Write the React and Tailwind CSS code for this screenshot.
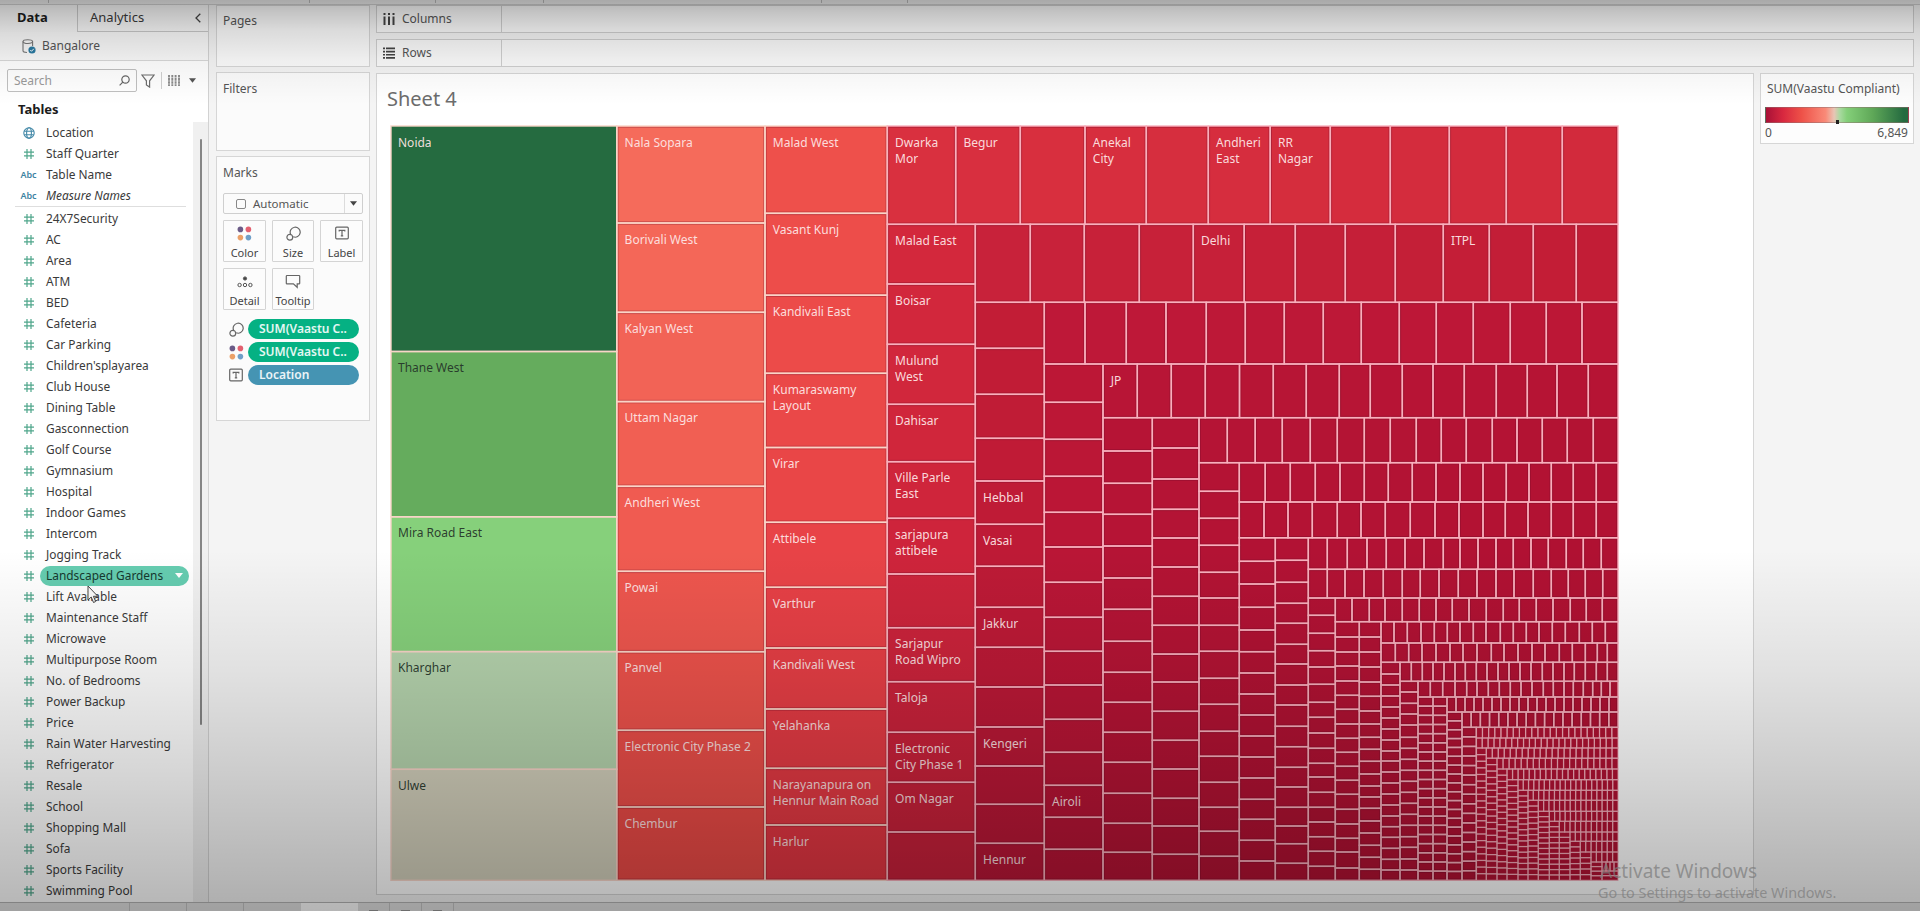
import React from 'react';

const FIELDS = [
  '24X7Security', 'AC', 'Area', 'ATM', 'BED', 'Cafeteria', 'Car Parking', "Children'splayarea",
  'Club House', 'Dining Table', 'Gasconnection', 'Golf Course', 'Gymnasium', 'Hospital',
  'Indoor Games', 'Intercom', 'Jogging Track', 'Landscaped Gardens', 'Lift Available',
  'Maintenance Staff', 'Microwave', 'Multipurpose Room', 'No. of Bedrooms', 'Power Backup',
  'Price', 'Rain Water Harvesting', 'Refrigerator', 'Resale', 'School', 'Shopping Mall', 'Sofa',
  'Sports Facility', 'Swimming Pool',
];

const LEFT = 391;
const TOP = 126;
const RIGHT = 1618;
const BOTTOM = 880.3;

// Builds evenly stepped cuts between two bounds.
const step = (from, to, size) => {
  const n = Math.max(1, Math.round((to - from) / size));
  return Array.from({ length: n - 1 }, (_, i) => from + ((i + 1) * (to - from)) / n);
};
const thirds = (base, list) => list.map((v) => base + v / 3);

// Each strip takes a slice off the left ("c") or the top ("r") of the free area:
// [kind, far edge, inner cuts, first colour, last colour, labels]
const STRIPS = [
  ['c', 616.8, [351.5, 516.8, 651.6, 769.3], null, null,
    { 0: 'Noida', 1: 'Thane West', 2: 'Mira Road East', 3: 'Kharghar', 4: 'Ulwe' }],
  ['c', 765, [223, 312.3, 401.6, 486.3, 571.3, 651.7, 730.3, 807], [245, 107, 91], [234, 74, 70],
    { 0: 'Nala Sopara', 1: 'Borivali West', 2: 'Kalyan West', 3: 'Uttam Nagar', 4: 'Andheri West', 5: 'Powai', 6: 'Panvel', 7: 'Electronic City Phase 2', 8: 'Chembur' }],
  ['c', 887.3, [213.3, 295.2, 373.3, 447.5, 522.3, 587.3, 648, 709, 768.3, 825], [238, 80, 75], [226, 54, 66],
    { 0: 'Malad West', 1: 'Vasant Kunj', 2: 'Kandivali East', 3: 'Kumaraswamy|Layout', 4: 'Virar', 5: 'Attibele', 6: 'Varthur', 7: 'Kandivali West', 8: 'Yelahanka', 9: 'Narayanapura on|Hennur Main Road', 10: 'Harlur' }],
  ['r', 224.3, [955.7, 1020.3, 1085, 1146.3, 1208.3, 1270.2, 1330.3, 1390.3, 1449.3, 1506.3, 1562.3], [217, 48, 63], [210, 42, 60],
    { 0: 'Dwarka|Mor', 1: 'Begur', 3: 'Anekal|City', 5: 'Andheri|East', 6: 'RR|Nagar' }],
  ['c', 975.3, [284, 344.3, 404.3, 461.7, 518.3, 574, 627.7, 681.7, 732.3, 782.3, 832], [211, 40, 60], [199, 32, 58],
    { 0: 'Malad East', 1: 'Boisar', 2: 'Mulund|West', 3: 'Dahisar', 4: 'Ville Parle|East', 5: 'sarjapura|attibele', 7: 'Sarjapur|Road Wipro', 8: 'Taloja', 9: 'Electronic|City Phase 1', 10: 'Om Nagar' }],
  ['r', 302.3, [1030.3, 1084.3, 1139.3, 1193.3, 1244.2, 1295.3, 1345.3, 1395.3, 1443.3, 1489.3, 1533.3, 1576.3], [200, 34, 58], [194, 29, 54],
    { 4: 'Delhi', 9: 'ITPL' }],
  ['c', 1044.3, [348.3, 394.3, 438.3, 481, 524.3, 566.3, 607.3, 647.3, 687, 727, 766, 804.3, 843.3], [194, 29, 54], [184, 22, 54],
    { 4: 'Hebbal', 5: 'Vasai', 7: 'Jakkur', 10: 'Kengeri', 13: 'Hennur' }],
  ['r', 364, [1085, 1126.3, 1166, 1206.3, 1245.3, 1284.3, 1323.3, 1361.3, 1399.3, 1436.3, 1473.3, 1510.3, 1546.3, 1582], [190, 24, 56], [188, 23, 54], {}],
  ['c', 1103, [402.3, 439.3, 476.3, 512.3, 547, 582.3, 617.3, 651.3, 685, 719.3, 752.3, 785.3, 817.3, 849.3], [188, 23, 54], [182, 20, 53], { 12: 'Airoli' }],
  ['r', 417.7, [1137.3, 1171.3, 1205.3, 1239.5, 1273.3, 1306.3, 1339.3, 1370.3, 1402.3, 1433, 1464.3, 1496.3, 1527.3, 1557, 1588.3], [184, 21, 54], [182, 20, 52], { 0: 'JP' }],
  ['c', 1152.3, [451, 483.3, 514.3, 546, 578, 609.3, 641.3, 672.3, 702.3, 732.3, 762.3, 793.3, 823.3, 852.3], [182, 20, 53], [180, 19, 52], {}],
  ['c', 1199, [448, 479, 509.3, 538, 567, 596.3, 625.3, 654.1, 682, 711.3, 740.3, 769, 798.3, 826, 854.3], [181, 20, 53], [178, 18, 51], {}],
  ['r', 462.7, [1227.3, 1255.2, 1282.3, 1310.3, 1337.3, 1364.3, 1390.3, 1416.3, 1441.3, 1466.3, 1492.3, 1517, 1542.3, 1567.3, 1593.3], [181, 20, 53], [179, 19, 51], {}],
  ['c', 1239.3, [491.3, 518.3, 545.3, 572.3, 598, 625.3, 651.3, 678.3, 704.3, 731.3, 756.3, 782.3, 807.3, 831.3, 856.3], [180, 19, 52], [177, 18, 51], {}],
  ['r', 502, [1265.2, 1290.3, 1315.3, 1340, 1364.3, 1388.3, 1412.3, 1436, 1460, 1483, 1506.3, 1529, 1551.3, 1573.3, 1596.3], [180, 19, 52], [178, 18, 51], {}],
  ['r', 537.8, [1264, 1288, 1312.3, 1337.3, 1361, 1385.3, 1410.3, 1435, 1459, 1483, 1505.3, 1528, 1551.3, 1573.3, 1596.3], [180, 19, 52], [178, 18, 51], {}],
  ['c', 1275.3, [561.3, 584, 607.3, 630, 651.7, 673, 694, 715, 736, 757, 778, 799.3, 819.3, 840.3, 861]],
  ['c', 1308.3, [560.3, 582.3, 603.3, 623.3, 644.3, 664, 685, 705, 726.3, 746.7, 767.3, 787, 807.3, 826, 843.7, 863.3]],
  ['r', 569.3, [1327.3, 1347.3, 1367, 1386.3, 1405, 1424, 1443.3, 1460, 1478, 1496, 1513.3, 1531, 1548.3, 1566.3, 1583.3, 1601.3]],
  ['r', 598, [1327.3, 1345, 1364, 1383.3, 1402.3, 1420.3, 1439, 1458.3, 1477, 1496, 1514, 1533.3, 1551.3, 1568.3, 1585.3, 1602.7]],
  ['c', 1335.3, [615.3, 633.3, 650.7, 667, 684.3, 702.3, 717.3, 733, 748.3, 763.3, 777, 792.3, 807.3, 822, 836.7, 851.3, 866.3]],
  ['r', 621.7, [1352, 1369.3, 1385, 1402.3, 1419.3, 1436, 1452.3, 1469, 1486.3, 1503.3, 1519.3, 1536.3, 1553, 1570.3, 1586.3, 1602.3]],
  ['c', 1359.3, [637, 652, 666, 681, 695.3, 709.3, 724, 738.3, 752.3, 766.3, 780.3, 794.3, 809.3, 824, 838.3, 852, 868]],
  ['c', 1381, [637, 652, 667, 682, 696.3, 711, 724, 737.3, 749.3, 761.3, 774, 786, 797, 808.3, 821, 833, 845.3, 857.3, 869.3]],
  ['r', 643, thirds(1240, [462, 502, 543, 583, 622, 660, 700, 738, 781, 820, 859, 897, 937, 976, 1018, 1057, 1096])],
  ['r', 662.3, thirds(1240, [466, 506, 546, 588, 630, 669, 711, 754, 792, 834, 876, 915, 958, 997, 1036, 1072, 1102])],
  ['c', 1400, thirds(650, [72, 105, 138, 171, 204, 237, 270, 303, 333, 366, 399, 432, 465, 498, 530, 562, 595, 628, 660])],
  ['r', 681.3, thirds(1240, [514, 547, 579, 612, 645, 676, 709, 741, 774, 807, 840, 873, 907, 939, 972, 1003, 1036, 1069, 1102])],
  ['c', 1418, thirds(650, [126, 160, 192, 225, 262, 295, 328, 361, 394, 427, 460, 493, 526, 560, 592, 627, 660])],
  ['r', 697, thirds(1240, [571, 608, 645, 680, 711, 745, 778, 811, 843, 876, 910, 940, 972, 1000, 1030, 1058, 1084, 1110])],
  ['c', 1433, step(697, 880.3, 9.2)],
  ['c', 1447, step(697, 880.3, 9.2)],
  ['r', 712, step(1447, 1618, 9)],
  ['c', 1462, step(712, 880.3, 9)],
  ['r', 727.3, step(1462, 1618, 9)],
  ['c', 1476.3, step(727.3, 880.3, 9.3)],
  ['r', 738, step(1476.3, 1618, 6.2)],
  ['r', 748, step(1476.3, 1618, 5.9)],
  ['c', 1486.3, step(748, 880.3, 6.5)],
  ['r', 758.2, step(1486.3, 1618, 6.1)],
  ['c', 1497, step(758.2, 880.3, 6.3)],
  ['r', 769, step(1497, 1618, 6)],
  ['c', 1507, step(769, 880.3, 6.3)],
  ['r', 779.7, step(1507, 1618, 5.6)],
  ['c', 1518, step(779.7, 880.3, 5.8)],
  ['r', 790.3, step(1518, 1618, 5.4)],
  ['c', 1528, step(790.3, 880.3, 5.8)],
  ['r', 800.3, step(1528, 1618, 5.3)],
  ['c', 1538.3, step(800.3, 880.3, 5.6)],
  ['r', 811.3, step(1538.3, 1618, 5.3)],
  ['c', 1549.3, step(811.3, 880.3, 5.5)],
  ['r', 821.3, step(1549.3, 1618, 5.3)],
  ['c', 1559.3, step(821.3, 880.3, 5.4)],
  ['r', 832, step(1559.3, 1618, 5.2)],
  ['c', 1570, step(832, 880.3, 5.4)],
  ['r', 841.3, step(1570, 1618, 5.2)],
  ['c', 1580.3, step(841.3, 880.3, 5.3)],
  ['r', 852, step(1580.3, 1618, 5.2)],
  ['c', 1591, step(852, 880.3, 5.5)],
  ['r', 862, step(1591, 1618, 5)],
  ['c', 1602, step(862, 880.3, 5)],
  ['r', 871, step(1602, 1618, 4.5)],
  ['c', 1618, step(871, 880.3, 4.5)],
];

const FIRST = ['#256b40', '#65ac5d', '#86d07b', '#b5d3ad', '#d2cfbb'];
const mix = (a, b, t) => `rgb(${a.map((v, i) => Math.round(v + (b[i] - v) * t)).join(',')})`;

function buildCells() {
  const cells = [];
  let x = LEFT;
  let y = TOP;
  STRIPS.forEach(([kind, edge, cuts, from = [178, 18, 52], to = [176, 17, 50], labels = {}], s) => {
    const isCol = kind === 'c';
    const marks = [isCol ? y : x, ...cuts, isCol ? BOTTOM : RIGHT];
    for (let i = 0; i < marks.length - 1; i++) {
      const fill = s === 0 ? FIRST[i] : mix(from, to, i / Math.max(1, marks.length - 2));
      const size = marks[i + 1] - marks[i];
      cells.push({
        x: isCol ? x : marks[i],
        y: isCol ? marks[i] : y,
        w: isCol ? edge - x : size,
        h: isCol ? size : edge - y,
        fill,
        strip: s,
        dark: s === 0 && i > 0,
        label: labels[i],
      });
    }
    if (isCol) x = edge;
    else y = edge;
  });
  return cells;
}
const CELLS = buildCells();

function Treemap() {
  return (
    <svg className="block h-[756px] w-[1230px] shrink-0" viewBox="390 125 1230 756" fontFamily="'Noto Sans', sans-serif">
      {CELLS.map((c, i) => (
        <g key={i}>
          <rect x={c.x} y={c.y} width={c.w} height={c.h} fill={c.fill} />
          {c.strip > 0 && c.w > 8 && c.h > 8 && (
            <rect x={c.x + 1.3} y={c.y + 1.3} width={c.w - 2.6} height={c.h - 2.6} fill="none" stroke="#5a0828" strokeOpacity="0.28" strokeWidth="1" />
          )}
        </g>
      ))}
      {CELLS.map((c, i) => (
        <rect key={i} x={c.x} y={c.y} width={c.w} height={c.h} fill="none" stroke={c.strip < 3 ? '#f9d5c8' : '#f7b0bd'} strokeOpacity={c.strip < 36 ? 0.92 : 0.75} strokeWidth={c.strip < 36 ? 1.5 : 1.2} />
      ))}
      {CELLS.filter((c) => c.label).map((c) => (
        <text key={c.label} fontSize="12" fill={c.dark ? '#26352a' : '#fde6e6'} fillOpacity="0.95">
          {c.label.split('|').map((line, j) => (
            <tspan key={j} x={c.x + (c.strip > 0 ? 7.8 : 7)} y={c.y + 20.6 + j * 16}>{line}</tspan>
          ))}
        </text>
      ))}
    </svg>
  );
}

const Hash = () => (
  <svg className="h-3 w-3" viewBox="0 0 12 12" fill="none" stroke="#4fa68b" strokeWidth="1.2">
    <path d="M4 1v10M8 1v10M1 4.2h10M1 7.8h10" />
  </svg>
);
const Globe = () => (
  <svg className="h-3 w-3" viewBox="0 0 12 12" fill="none" stroke="#4489a8" strokeWidth="1.1">
    <circle cx="6" cy="6" r="5.2" />
    <ellipse cx="6" cy="6" rx="2.4" ry="5.2" />
    <path d="M1.2 4.3h9.6M1.2 7.7h9.6" />
  </svg>
);
const Abc = () => <span className="text-[9px] font-semibold text-[#3e84a3]">Abc</span>;
const Dots = () => (
  <svg className="h-[15px] w-[15px]" viewBox="0 0 15 15">
    <circle cx="3.4" cy="3.4" r="2.8" fill="#6b5b87" />
    <circle cx="11.4" cy="3.4" r="2.8" fill="#e3606f" />
    <circle cx="3.4" cy="11.6" r="2.8" fill="#eba068" />
    <circle cx="11.4" cy="11.6" r="2.8" fill="#6f9fc8" />
  </svg>
);
const SizeIcon = () => (
  <svg className="h-[15px] w-[15px]" viewBox="0 0 15 15" fill="none" stroke="#666" strokeWidth="1.2">
    <path d="M4.6 8.2A5 5 0 1 1 7.2 10.8" />
    <circle cx="3.8" cy="11.2" r="2.9" />
  </svg>
);
const LabelIcon = () => (
  <svg className="h-[14px] w-[14px]" viewBox="0 0 14 14" fill="none" stroke="#666" strokeWidth="1.2">
    <rect x="0.7" y="1.2" width="12.6" height="11.6" rx="1" />
    <path d="M4.2 5.4V4.3h5.6v1.1M7 4.3v5.6M5.8 9.9h2.4" />
  </svg>
);
const DetailIcon = () => (
  <svg className="h-[14px] w-[16px]" viewBox="0 0 16 14" fill="none" stroke="#555" strokeWidth="1">
    <circle cx="8" cy="4.5" r="1.6" fill="#444" />
    <circle cx="2.6" cy="11" r="1.7" />
    <circle cx="8" cy="11" r="1.7" />
    <circle cx="13.4" cy="11" r="1.7" />
  </svg>
);
const TooltipIcon = () => (
  <svg className="h-[15px] w-[16px]" viewBox="0 0 16 15" fill="none" stroke="#666" strokeWidth="1.2">
    <path d="M2 1.5h12a.7.7 0 0 1 .7.7v7a.7.7 0 0 1-.7.7h-1.8v3.4L8.4 9.9H2a.7.7 0 0 1-.7-.7v-7a.7.7 0 0 1 .7-.7z" />
  </svg>
);
const Caret = ({ className }) => (
  <svg className={className} viewBox="0 0 8 5" fill="currentColor"><path d="M0 0h8L4 5z" /></svg>
);

function Field({ icon, name, italic, active }) {
  return (
    <div className="flex h-[21px] shrink-0 items-center">
      <span className="ml-[18px] flex w-[21px] justify-center">{icon}</span>
      <span
        className={
          active
            ? 'ml-px flex h-5 w-[149px] items-center justify-between rounded-full bg-[#65ccb0] pr-[6px] pl-[6px] text-[#16392f]'
            : italic
              ? 'ml-[7px] italic'
              : 'ml-[7px]'
        }
      >
        <span className="whitespace-nowrap">{name}</span>
        {active && <Caret className="h-[5px] w-2 text-white" />}
      </span>
    </div>
  );
}

function Sidebar() {
  return (
    <aside className="flex w-[209px] shrink-0 flex-col border-r border-[#d2d2d2] bg-white text-[#3a3a3a]">
      <div className="flex h-[27px] shrink-0 bg-[#f7f7f7] text-[13px]">
        <div className="w-[77px] pt-[3px] pl-[17px] text-[13px] font-bold text-[#1c1c1c]">Data</div>
        <div className="flex flex-1 justify-between border-b border-l border-[#c8c8c8] pt-[3px] pr-[7px] pl-3">
          Analytics
          <svg className="mt-[5px] h-2.5 w-1.5" viewBox="0 0 6 10" fill="none" stroke="#444" strokeWidth="1.3"><path d="M5.3.7 1 5l4.3 4.3" /></svg>
        </div>
      </div>
      <div className="flex h-[29px] shrink-0 items-center border-b border-[#d8d8d8] bg-[#f9f9f9] pl-[22px] text-[12px] text-[#555]">
        <svg className="mr-1.5 h-[15px] w-[14px]" viewBox="0 0 14 15" fill="none">
          <path d="M1 2.6v9.2c0 .9 1.8 1.7 4 1.7M10.6 2.6v4.5" stroke="#777" strokeWidth="1.1" />
          <ellipse cx="5.8" cy="2.6" rx="4.8" ry="1.9" stroke="#777" strokeWidth="1.1" />
          <circle cx="10" cy="11" r="3.6" fill="#2b7ba3" />
          <path d="m8.3 11 1.2 1.3 2.3-2.5" stroke="#fff" />
        </svg>
        Bangalore
      </div>
      <div className="mt-2 flex h-[23px] shrink-0 items-center pl-[7px]">
        <div className="flex h-[23px] w-[130px] items-center justify-between rounded-[2px] border border-[#c0c0c0] px-1.5 text-xs text-[#9a9a9a]">
          Search
          <svg className="h-[11px] w-[11px]" viewBox="0 0 11 11" fill="none" stroke="#666" strokeWidth="1.2"><circle cx="6.5" cy="4.5" r="3.7" /><path d="M3.8 7.2.6 10.4" /></svg>
        </div>
        <svg className="ml-1 h-[14px] w-[14px]" viewBox="0 0 14 14" fill="none" stroke="#6d6d6d" strokeWidth="1.2"><path d="M.9 1h12.2L8.600 6.800v6.300L5.400 11V6.800z" /></svg>
        <div className="ml-[6px] h-[17px] w-px bg-[#d0d0d0]" />
        <svg className="ml-[6px] h-[11px] w-3" viewBox="0 0 12 11" fill="none" stroke="#8b8b8b" strokeWidth="1.9"><path d="M1 0v11M4.3 0v11M7.6 0v11M11 0v11" strokeDasharray="2.6 .5" /></svg>
        <Caret className="ml-[9px] h-[5px] w-[7px] text-[#555]" />
      </div>
      <div className="h-[30px] shrink-0 pt-[7px] pl-[18px] text-[13px] leading-[20px] font-bold text-[#1c1c1c]">Tables</div>
      <div className="flex min-h-0 flex-1 overflow-hidden">
        <div className="flex w-[193px] flex-col text-[11.9px]">
          <Field icon={<Globe />} name="Location" />
          <Field icon={<Hash />} name="Staff Quarter" />
          <Field icon={<Abc />} name="Table Name" />
          <Field icon={<Abc />} name="Measure Names" italic />
          <div className="mr-[7px] mb-px ml-[15px] h-px shrink-0 bg-[#dedede]" />
          {FIELDS.map((f) => (
            <Field key={f} icon={<Hash />} name={f} active={f === 'Landscaped Gardens'} />
          ))}
        </div>
        <div className="flex flex-1 justify-center bg-[#f0f0f0] pt-[17px]">
          <div className="h-[586px] w-[2px] rounded bg-[#858585]" />
        </div>
      </div>
    </aside>
  );
}

const MarkButton = ({ icon, name }) => (
  <div className="flex h-[42px] flex-col items-center justify-between rounded-[1px] border border-[#d4d4d4] bg-[#fcfcfc] pt-[5px] pb-px text-[11px] leading-[15px] text-[#444]">
    {icon}
    {name}
  </div>
);

const Pill = ({ icon, name, blue }) => (
  <div className="flex items-center">
    <span className="flex w-[22px] justify-center pl-1">{icon}</span>
    <span className={(blue ? 'bg-[#4594b3]' : 'bg-[#05b183]') + ' ml-[3px] flex h-5 w-[111px] items-center rounded-full pl-[11px] text-[12px] font-semibold text-white/90'}>{name}</span>
  </div>
);

function Cards() {
  return (
    <div className="flex w-[167px] shrink-0 flex-col gap-[5px] pr-[6px] pl-[7px] text-xs text-[#555]">
      <section className="h-[62px] border border-[#d6d6d6] bg-[#fbfbfb] px-1.5 pt-[7px]">Pages</section>
      <section className="h-[79px] border border-[#d6d6d6] bg-[#fbfbfb] px-1.5 pt-[8px]">Filters</section>
      <section className="flex h-[265px] flex-col border border-[#d6d6d6] bg-[#fbfbfb] px-1.5 pt-[7px]">
        <div className="leading-[18px]">Marks</div>
        <div className="mt-[11px] flex h-[21px] shrink-0 items-center rounded-[2px] border border-[#cfcfcf] text-[11.5px]">
          <span className="ml-[12px] h-[10px] w-[10px] rounded-[2px] border border-[#888]" />
          <span className="ml-[7px] flex-1">Automatic</span>
          <span className="flex h-full w-[18px] items-center justify-center border-l border-[#dcdcdc]"><Caret className="h-[5px] w-[7px] text-[#444]" /></span>
        </div>
        <div className="mt-[6px] grid grid-cols-[43px_42px_43px] gap-x-[6px] gap-y-[6px]">
          <MarkButton icon={<Dots />} name="Color" />
          <MarkButton icon={<SizeIcon />} name="Size" />
          <MarkButton icon={<LabelIcon />} name="Label" />
          <MarkButton icon={<DetailIcon />} name="Detail" />
          <MarkButton icon={<TooltipIcon />} name="Tooltip" />
        </div>
        <div className="mt-[9px] flex flex-col gap-[3px]">
          <Pill icon={<SizeIcon />} name="SUM(Vaastu C.." />
          <Pill icon={<Dots />} name="SUM(Vaastu C.." />
          <Pill icon={<LabelIcon />} name="Location" blue />
        </div>
      </section>
    </div>
  );
}

const Shelf = ({ icon, name }) => (
  <div className="flex h-[28px] shrink-0 border border-[#cfcfcf] bg-[#fafafa] text-xs text-[#555]">
    <div className="flex w-[125px] items-center gap-[7px] border-r border-[#cfcfcf] pl-[6px]">
      {icon}
      {name}
    </div>
  </div>
);

function Legend() {
  return (
    <section className="h-[71px] w-[154px] shrink-0 border border-[#d6d6d6] bg-[#fdfdfd] px-1 text-xs text-[#555]">
      <div className="mt-[6px] ml-[2px] text-[12px] leading-[18px] whitespace-nowrap">SUM(Vaastu Compliant)</div>
      <div className="relative mt-[9px] h-4 w-[144px] border border-[#8f7070]/50 bg-[linear-gradient(90deg,#a81137_0%,#d8283f_12%,#ee5148_25%,#f98a78_42%,#e8c5b5_48%,#a9d9a0_52%,#84cf79_57%,#5fa858_75%,#256b40_97%)]">
        <span className="absolute -bottom-[2px] left-[70px] h-1 w-[3px] bg-[#222]" />
      </div>
      <div className="mt-[1px] flex w-[143px] justify-between leading-[18px]"><span>0</span><span>6,849</span></div>
    </section>
  );
}

export default function App() {
  return (
    <div className="relative flex h-[911px] w-full flex-col overflow-hidden bg-[#f4f4f4] font-['Noto_Sans',sans-serif]">
      <div className="flex h-[5px] shrink-0 border-b border-[#cfcfcf] bg-[#eee]">
        <div className="w-12" />
        <div className="h-[3px] w-[262px] border-x border-[#bbb]" />
        <div className="ml-[125px] h-[3px] w-[109px] border-x border-[#bbb]" />
        <div className="ml-[277px] h-[3px] w-[87px] border-x border-[#bbb]" />
      </div>
      <div className="flex min-h-0 flex-1">
        <Sidebar />
        <Cards />
        <main className="flex flex-1 flex-col gap-[6px] pr-[6px]">
          <Shelf
            name="Columns"
            icon={<svg className="h-3 w-3" viewBox="0 0 12 12" fill="#444"><path d="M.5 3.500h2V12h-2zM5 3.500h2V12H5zM9.500 3.500h2V12h-2zM.5 0h2v2h-2zM5 0h2v2H5zM9.500 0h2v2h-2z" /></svg>}
          />
          <Shelf
            name="Rows"
            icon={<svg className="h-3 w-3" viewBox="0 0 12 12" fill="#444"><path d="M3 .5h9v1.700H3zM3 3.700h9v1.700H3zM3 6.900h9v1.700H3zM3 10.100h9v1.700H3zM0 .5h2v1.700H0zM0 3.700h2v1.700H0zM0 6.900h2v1.700H0zM0 10.100h2v1.700H0z" /></svg>}
          />
          <div className="flex items-start gap-[6px]">
            <section className="flex h-[822px] w-[1378px] shrink-0 flex-col border border-[#d6d6d6] bg-white">
              <h1 className="h-[51px] shrink-0 pt-[12px] pl-[10px] text-[20px] leading-[26px] text-[#6c6c6c]">Sheet 4</h1>
              <div className="pl-[13px]"><Treemap /></div>
            </section>
            <Legend />
          </div>
        </main>
      </div>
      <div className="flex h-[9px] shrink-0 border-t border-[#b5b5b5] bg-[#e2e2e2]">
        <div className="w-[130px] border-r border-[#c4c4c4]" />
        <div className="w-[57px] border-r border-[#c4c4c4]" />
        <div className="w-[57px] border-r border-[#c4c4c4]" />
        <div className="w-[57px]" />
        <div className="w-[57px] bg-white" />
        <div className="flex w-8 items-end justify-center border-r border-[#c4c4c4]"><span className="h-px w-[9px] bg-[#999]" /></div>
        <div className="flex w-8 items-end justify-center border-r border-[#c4c4c4]"><span className="h-px w-[9px] bg-[#999]" /></div>
        <div className="flex w-8 items-end justify-center border-r border-[#c4c4c4]"><span className="h-px w-[9px] bg-[#999]" /></div>
      </div>
      <div className="pointer-events-none absolute inset-0 bg-[linear-gradient(180deg,rgba(0,0,0,.29)_0px,rgba(0,0,0,.22)_12px,rgba(0,0,0,.13)_30px,rgba(0,0,0,.05)_60px,rgba(0,0,0,0)_105px,rgba(0,0,0,0)_550px,rgba(0,0,0,.08)_670px,rgba(0,0,0,.16)_770px,rgba(0,0,0,.25)_870px,rgba(0,0,0,.29)_911px)]" />
      <div className="pointer-events-none absolute top-[858px] left-[1598px] whitespace-nowrap text-[#7a7a7a]/70">
        <div className="pl-[2px] text-[19px] leading-[26px]">Activate Windows</div>
        <div className="text-[14.4px] leading-[18px]">Go to Settings to activate Windows.</div>
      </div>
      <svg className="pointer-events-none absolute top-[585px] left-[87px] h-[20px] w-3" viewBox="0 0 12 20">
        <path d="M1 1v14l3.200-3 2.300 5.500 2.200-1-2.300-5.200h4.400z" fill="#f4f4f4" stroke="#444" strokeWidth="1" />
      </svg>
    </div>
  );
}
